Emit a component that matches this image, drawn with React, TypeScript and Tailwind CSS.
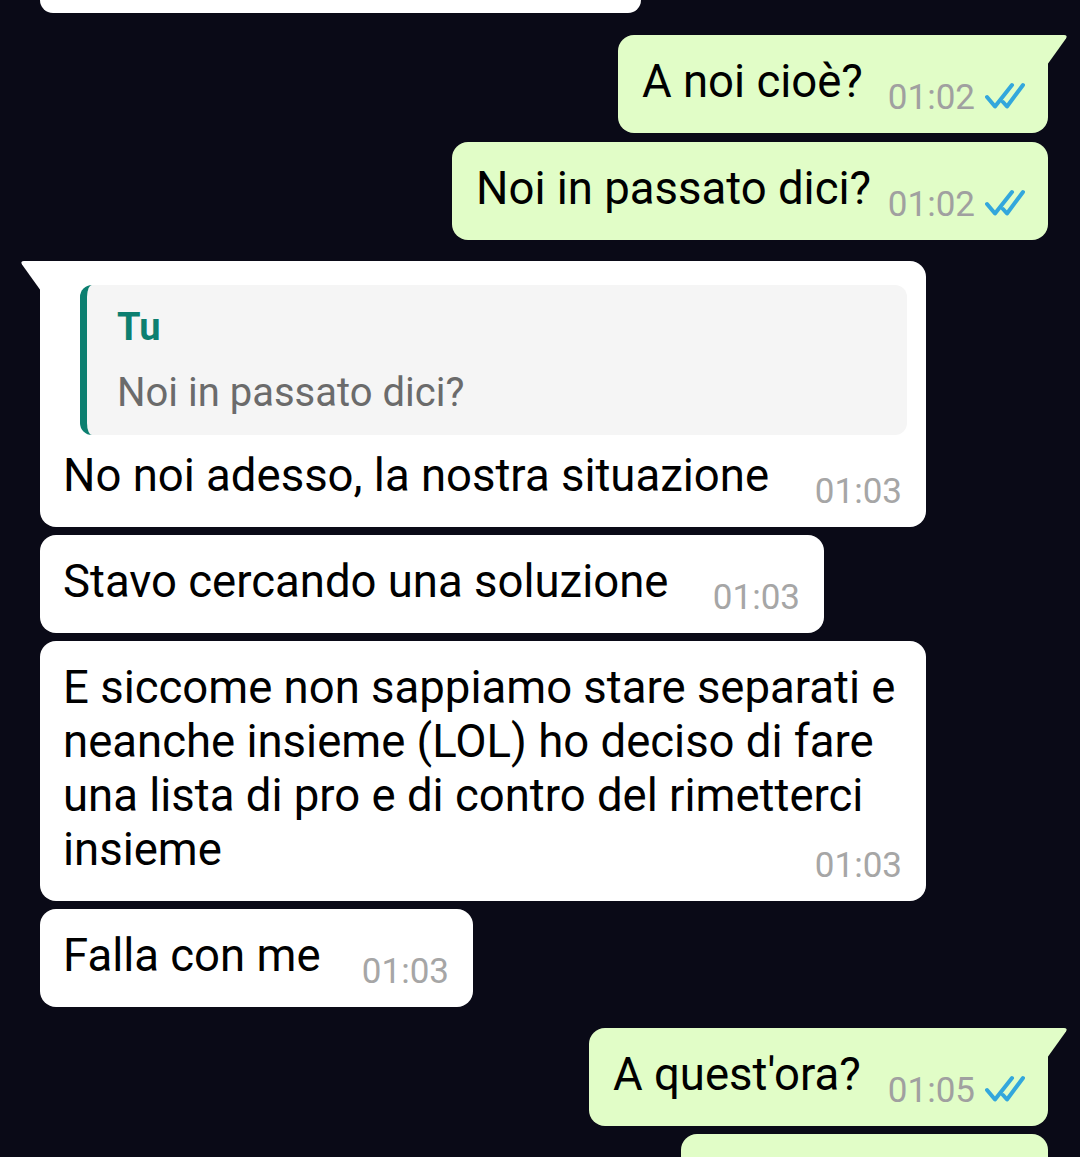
import React from "react";

const OUT_BG = "#e1fdc7";

function Ticks() {
  return (
    <svg
      width="40"
      height="27"
      viewBox="0 0 40 27"
      className="inline-block align-baseline ml-[10px]"
      fill="none"
      stroke="#33a7dc"
      strokeWidth="4"
      strokeLinecap="round"
      strokeLinejoin="round"
    >
      <path d="M2 15 L10 24.5 L27 3" />
      <path d="M18 20 L22 24.5 L38 3" />
    </svg>
  );
}

function OutTail() {
  return (
    <svg
      width="21"
      height="30"
      viewBox="0 0 21 30"
      className="absolute top-0 right-[-20px]"
    >
      <path d="M0 0 H17 Q21 0 19 3.5 L0 30 Z" fill={OUT_BG} />
    </svg>
  );
}

function InTail() {
  return (
    <svg
      width="21"
      height="30"
      viewBox="0 0 21 30"
      className="absolute top-0 left-[-20px]"
    >
      <path d="M21 0 H4 Q0 0 2 3.5 L21 30 Z" fill="#ffffff" />
    </svg>
  );
}

function OutMeta({ time }: { time: string }) {
  return (
    <div className="mt-[23px] text-[35px] leading-[40px] text-[#a0a0a0] whitespace-nowrap">
      <span>{time}</span>
      <Ticks />
    </div>
  );
}

function InMeta({ time }: { time: string }) {
  return (
    <div className="mt-[23px] text-[35px] leading-[40px] text-[#a6a6a6] whitespace-nowrap">
      {time}
    </div>
  );
}

export default function App() {
  return (
    <div className="w-[1080px] h-[1157px] overflow-hidden bg-[#0a0a17] font-['Roboto',sans-serif]">
      {/* partially visible bubble at top */}
      <div className="ml-[40px] w-[601px] h-[13px] bg-white rounded-b-[16px]" />

      {/* Outgoing 1 */}
      <div className="mt-[22px] flex justify-end pr-[32px]">
        <div className="relative w-[430px] bg-[#e1fdc7] rounded-[16px] rounded-tr-none pt-[20px] pb-[15px] pl-[24px] pr-[23px] flex justify-between items-start">
          <OutTail />
          <span className="text-[45.5px] leading-[54px] text-black whitespace-nowrap">
            A noi cioè?
          </span>
          <OutMeta time="01:02" />
        </div>
      </div>

      {/* Outgoing 2 */}
      <div className="mt-[9px] flex justify-end pr-[32px]">
        <div className="w-[596px] bg-[#e1fdc7] rounded-[16px] pt-[20px] pb-[15px] pl-[24px] pr-[23px] flex justify-between items-start">
          <span className="text-[45.5px] leading-[54px] text-black whitespace-nowrap">
            Noi in passato dici?
          </span>
          <OutMeta time="01:02" />
        </div>
      </div>

      {/* Incoming reply */}
      <div className="mt-[21px] pl-[40px]">
        <div className="relative w-[886px] bg-white rounded-[16px] rounded-tl-none pt-[24px] pb-[15px]">
          <InTail />
          <div className="ml-[40px] mr-[19px] bg-[#f5f5f5] rounded-[12px] border-l-[7px] border-[#0c7f70] pl-[30px] pt-[20px] pb-[18px]">
            <div className="text-[38px] leading-[44px] font-bold text-[#0c7f70]">
              Tu
            </div>
            <div className="mt-[20px] text-[40px] leading-[48px] text-[#6b6b6b] whitespace-nowrap">
              Noi in passato dici?
            </div>
          </div>
          <div className="mt-[14px] pl-[23px] pr-[24px] flex justify-between items-start">
            <span className="text-[45.5px] leading-[54px] text-black whitespace-nowrap">
              No noi adesso, la nostra situazione
            </span>
            <InMeta time="01:03" />
          </div>
        </div>
      </div>

      {/* Incoming 2 */}
      <div className="mt-[8px] pl-[40px]">
        <div className="w-[784px] bg-white rounded-[16px] pt-[20px] pb-[15px] pl-[23px] pr-[24px] flex justify-between items-start">
          <span className="text-[45.5px] leading-[54px] text-black whitespace-nowrap">
            Stavo cercando una soluzione
          </span>
          <InMeta time="01:03" />
        </div>
      </div>

      {/* Incoming 3 multi-line */}
      <div className="mt-[8px] pl-[40px]">
        <div className="w-[886px] bg-white rounded-[16px] pt-[20px] pb-[15px] pl-[23px] pr-[24px]">
          <div className="text-[45.5px] leading-[54px] text-black whitespace-nowrap">
            <div>E siccome non sappiamo stare separati e</div>
            <div>neanche insieme (LOL) ho deciso di fare</div>
            <div>una lista di pro e di contro del rimetterci</div>
            <div>insieme</div>
          </div>
          <div className="-mt-[31px] flex justify-end">
            <div className="text-[35px] leading-[40px] text-[#a6a6a6] whitespace-nowrap">
              01:03
            </div>
          </div>
        </div>
      </div>

      {/* Incoming 4 */}
      <div className="mt-[8px] pl-[40px]">
        <div className="w-[433px] bg-white rounded-[16px] pt-[20px] pb-[15px] pl-[23px] pr-[24px] flex justify-between items-start">
          <span className="text-[45.5px] leading-[54px] text-black whitespace-nowrap">
            Falla con me
          </span>
          <InMeta time="01:03" />
        </div>
      </div>

      {/* Outgoing 3 */}
      <div className="mt-[21px] flex justify-end pr-[32px]">
        <div className="relative w-[459px] bg-[#e1fdc7] rounded-[16px] rounded-tr-none pt-[20px] pb-[15px] pl-[24px] pr-[23px] flex justify-between items-start">
          <OutTail />
          <span className="text-[45.5px] leading-[54px] text-black whitespace-nowrap">
            A quest'ora?
          </span>
          <OutMeta time="01:05" />
        </div>
      </div>

      {/* Outgoing 4, partially visible */}
      <div className="mt-[8px] flex justify-end pr-[32px]">
        <div className="w-[367px] h-[60px] bg-[#e1fdc7] rounded-t-[16px]" />
      </div>
    </div>
  );
}
